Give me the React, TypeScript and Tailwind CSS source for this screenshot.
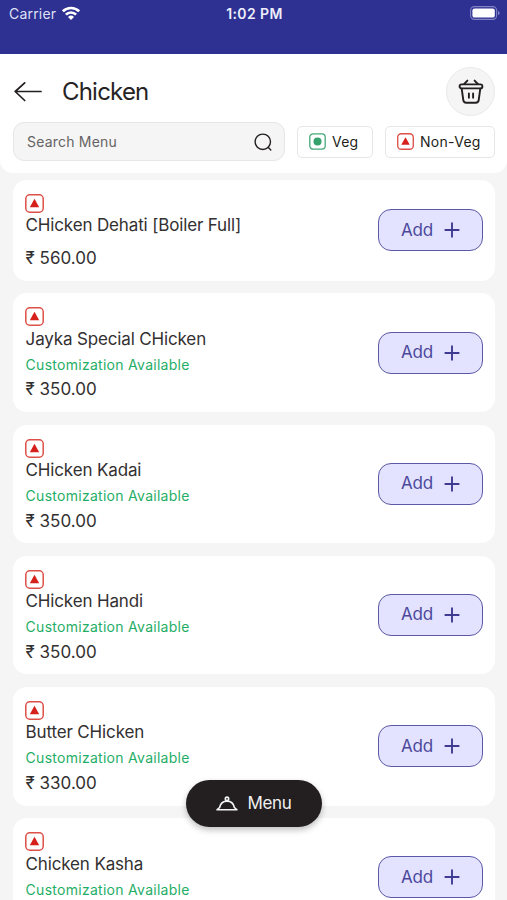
const menuItems = [
  { name: "CHicken Dehati [Boiler Full]", price: "560.00", custom: false },
  { name: "Jayka Special CHicken", price: "350.00", custom: true },
  { name: "CHicken Kadai", price: "350.00", custom: true },
  { name: "CHicken Handi", price: "350.00", custom: true },
  { name: "Butter CHicken", price: "330.00", custom: true },
  { name: "Chicken Kasha", price: "", custom: true },
];

const NonVegIcon = ({ className }: { className: string }) => (
  <svg viewBox="0 0 19 19" className={className} fill="none">
    <rect x="0.8" y="0.8" width="17.4" height="17.4" rx="4" stroke="#dd5048" strokeWidth="1.5" />
    <path d="M9.5 4.8 14.2 13.2H4.8Z" fill="#d6201b" />
  </svg>
);

const VegIcon = () => (
  <svg viewBox="0 0 17 17" className="size-[17px]" fill="none">
    <rect x="0.8" y="0.8" width="15.4" height="15.4" rx="3.4" stroke="#45a878" strokeWidth="1.3" />
    <circle cx="8.5" cy="8.5" r="4" fill="#35a26d" />
  </svg>
);

const StatusBar = () => (
  <div className="h-[54px] bg-[#2e3192] text-white">
    <div className="grid h-7 grid-cols-3 items-center pl-[9px] pr-[7px]">
      <div className="-mt-px flex items-center gap-[6px]">
        <span className="text-[14px] tracking-[0.2px] text-[#dfe0f5]">Carrier</span>
        <svg viewBox="0 0 18 14" className="-mt-0.5 h-[14px] w-[18px]" fill="none" stroke="white" strokeWidth="2.7">
          <path d="M0.9 5.3a11.6 11.6 0 0 1 16.2 0" />
          <path d="M3.9 8.6a7.2 7.2 0 0 1 10.2 0" />
          <path d="M9 13.9 6 10.9a4.3 4.3 0 0 1 6 0Z" fill="white" stroke="none" />
        </svg>
      </div>
      <span className="-mt-px text-center text-[14px] font-semibold tracking-[0.4px] text-[#eeeefb]">1:02 PM</span>
      <svg viewBox="0 0 30 14" className="-mt-0.5 h-[14px] w-[30px] justify-self-end" fill="none">
        <rect x="0.6" y="0.6" width="26" height="12.8" rx="3.8" stroke="#8082c2" strokeWidth="1.1" />
        <rect x="2.4" y="2.4" width="22.4" height="9.2" rx="2.2" fill="white" />
        <path d="M28 4.8q1.7.8 1.7 2.2T28 9.2Z" fill="#8082c2" />
      </svg>
    </div>
  </div>
);

const Header = () => (
  <header className="h-[119px] rounded-b-[13px] bg-white pl-[13px] pr-3 pt-[13px]">
    <div className="flex h-[49px] items-center">
      <svg viewBox="0 0 28 20" className="ml-px h-5 w-7" fill="none" stroke="#231f20" strokeWidth="1.7" strokeLinecap="round" strokeLinejoin="round">
        <path d="M27 9.5H1.2M10.7 .8 1.2 9.5l9.5 9" />
      </svg>
      <h1 className="ml-5 pt-px text-[24px] leading-8 tracking-[-0.8px] text-[#262324]">Chicken</h1>
      <button className="ml-auto flex size-[49px] items-center justify-center rounded-full border border-[#e9e9e9] bg-[#f5f5f5]">
        <svg viewBox="0 0 26 26" className="size-[26px]" fill="none" stroke="#231f20" strokeWidth="1.9" strokeLinecap="round" strokeLinejoin="round">
          <path d="M9.4 1.6 6.2 5M16.6 1.6 19.8 5" />
          <rect x="1.6" y="5.4" width="22.8" height="4" rx="2" />
          <path d="m3.7 9.6 1.6 11.6a3 3 0 0 0 3 2.6h9.4a3 3 0 0 0 3-2.6l1.6-11.600M10.900 14.500v4.200M15.100 14.500v4.200" />
        </svg>
      </button>
    </div>
    <div className="mt-1.5 flex items-center">
      <div className="flex h-[39px] w-[272px] items-center justify-between rounded-[11px] border border-[#e6e6e6] bg-[#f5f5f5] pl-[13px] pr-3">
        <span className="text-[14px] tracking-[0.2px] text-[#666364]">Search Menu</span>
        <svg viewBox="0 0 18 18" className="size-[18px]" fill="none" stroke="#231f20" strokeWidth="1.4" strokeLinecap="round">
          <circle cx="8.8" cy="8.8" r="7.7" />
          <path d="m14.2 14.3 2.6 2.6" />
        </svg>
      </div>
      <button className="ml-3 flex h-8 w-[76px] items-center gap-1.5 rounded-[5px] border border-[#e6e6e6] bg-white pl-[11px]">
        <VegIcon />
        <span className="text-[14px] tracking-[0.2px] text-[#231f20]">Veg</span>
      </button>
      <button className="ml-3 flex h-8 w-[110px] items-center gap-1.5 rounded-[5px] border border-[#e6e6e6] bg-white pl-[11px]">
        <NonVegIcon className="size-[17px] shrink-0" />
        <span className="whitespace-nowrap text-[14px] tracking-[0.3px] text-[#231f20]">Non-Veg</span>
      </button>
    </div>
  </header>
);

const MenuCard = ({ item }: { item: (typeof menuItems)[number] }) => (
  <div
    className={`flex shrink-0 items-center justify-between rounded-[14px] bg-white px-3 ${
      item.custom ? "h-[118.5px]" : "h-[100.8px]"
    }`}
  >
    <div className="h-full pt-[14px]">
      <NonVegIcon className="size-[19px]" />
      <p className="ml-[0.6px] mt-[0.4px] text-[17px] leading-6 tracking-[-0.15px] text-[#333031]">{item.name}</p>
      {item.custom && (
        <p className="ml-[0.6px] mt-[3px] text-[14px] leading-[22px] tracking-[0.28px] text-[#1fae66]">
          Customization Available
        </p>
      )}
      {item.price && (
        <p className={`ml-[0.6px] text-[17px] leading-6 text-[#333031] ${item.custom ? "mt-[1.6px]" : "mt-[9px]"}`}>
          ₹ {item.price}
        </p>
      )}
    </div>
    <button className="flex h-[42px] w-[105px] items-center justify-center gap-[11px] rounded-[13px] border-[1.5px] border-[#5b58a5] bg-[#e3e3ff] text-[17px] tracking-[-0.1px] text-[#4c489b]">
      Add
      <svg viewBox="0 0 16 16" className="size-4" fill="none" stroke="#3f3b93" strokeWidth="1.9">
        <path d="M8 .6v14.8M.6 8h14.8" />
      </svg>
    </button>
  </div>
);

const App = () => {
  return (
    <div className="relative flex h-[900px] w-[507px] flex-col overflow-hidden bg-[#f5f5f5] font-['Inter',sans-serif]">
      <StatusBar />
      <Header />

      {/* Dishes */}
      <main className="flex min-h-0 flex-1 flex-col gap-[12.7px] overflow-hidden pl-[13px] pr-3 pt-[7px]">
        {menuItems.map((item) => (
          <MenuCard key={item.name} item={item} />
        ))}
      </main>

      {/* Floating menu button */}
      <button className="absolute left-[186px] top-[780px] flex h-[47px] w-[136px] items-center justify-center gap-[9px] rounded-full bg-[#231f20] text-[17px] tracking-[-0.3px] text-[#f0f0f0] shadow-[0_3px_6px_rgba(0,0,0,0.25)]">
        <svg viewBox="0 0 22 15" className="h-[15px] w-[22px]" fill="none" stroke="#f5f5f5" strokeWidth="1.6" strokeLinejoin="round">
          <path d="M1 13.8h20l-2.6-2.3C17.6 7.6 14.7 5.1 11 5.1S4.4 7.6 3.6 11.5Z" />
          <circle cx="11" cy="2.8" r="1.7" />
        </svg>
        Menu
      </button>
    </div>
  );
};

export default App;
